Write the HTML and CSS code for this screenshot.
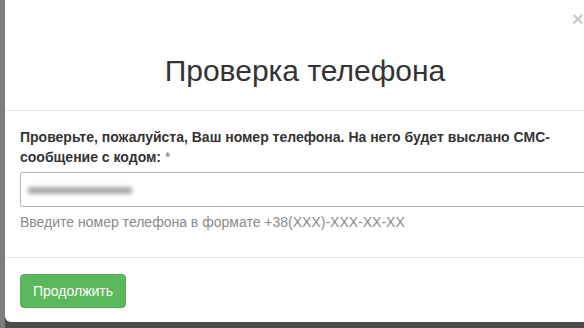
FILE: index.html
```html
<!DOCTYPE html>
<html lang="ru">
<head>
<meta charset="utf-8">
<title>Проверка телефона</title>
<link rel="stylesheet" href="styles.css">
</head>
<body>
<div class="modal">
  <button class="close" type="button">×</button>
  <div class="modal-header">
    <h4 class="modal-title">Проверка телефона</h4>
  </div>
  <div class="modal-body">
    <label class="label">Проверьте, пожалуйста, Ваш номер телефона. На него будет выслано СМС-сообщение с кодом: <span class="req">*</span></label>
    <div class="field"><span class="blurred"></span></div>
    <p class="help">Введите номер телефона в формате +38(XXX)-XXX-XX-XX</p>
  </div>
  <div class="modal-footer">
    <button class="btn" type="button">Продолжить</button>
  </div>
</div>
</body>
</html>
```
FILE: styles.css
```css
html, body {
  margin: 0;
  padding: 0;
}
body {
  background: #4d4d4d;
  font-family: "Liberation Sans", Arial, sans-serif;
  font-size: 14px;
  line-height: 20px;
  color: #333;
  overflow: hidden;
  height: 328px;
  border-left: 5px solid #7d7d7d;
}
.modal {
  position: relative;
  width: 600px;
  background: #fff;
  border-radius: 0 0 6px 6px;
}
.close {
  position: absolute;
  top: 8px;
  right: 21px;
  border: 0;
  background: none;
  padding: 0;
  font-family: "Liberation Sans", Arial, sans-serif;
  font-size: 21px;
  font-weight: bold;
  line-height: 21px;
  color: #000;
  opacity: 0.2;
}
.modal-header {
  padding: 55px 15px 24px;
  border-bottom: 1px solid #e5e5e5;
}
.modal-title {
  margin: 0;
  font-size: 30px;
  font-weight: normal;
  line-height: 31px;
  text-align: center;
  color: #333;
}
.modal-body {
  padding: 16px 15px 15px;
}
.label {
  display: block;
  font-weight: bold;
  margin-bottom: 5px;
}
.req {
  font-weight: normal;
  color: #777;
}
.field {
  display: flex;
  align-items: center;
  box-sizing: border-box;
  height: 35px;
  border: 1px solid #b5b5b5;
  border-radius: 2px;
  padding: 0 7px;
}
.blurred {
  display: block;
  width: 104px;
  height: 7px;
  margin-top: 1px;
  background: #a8a8a8;
  filter: blur(2px);
}
.help {
  margin: 5px 0 10px;
  color: #8a8a8a;
}
.modal-footer {
  padding: 16px 15px 14px;
  border-top: 1px solid #e5e5e5;
}
.btn {
  display: block;
  box-sizing: border-box;
  height: 34px;
  padding: 6px 12px;
  font-family: "Liberation Sans", Arial, sans-serif;
  font-size: 14px;
  line-height: 20px;
  color: #fff;
  background: #5cb85c;
  border: 1px solid #4cae4c;
  border-radius: 4px;
}
```
